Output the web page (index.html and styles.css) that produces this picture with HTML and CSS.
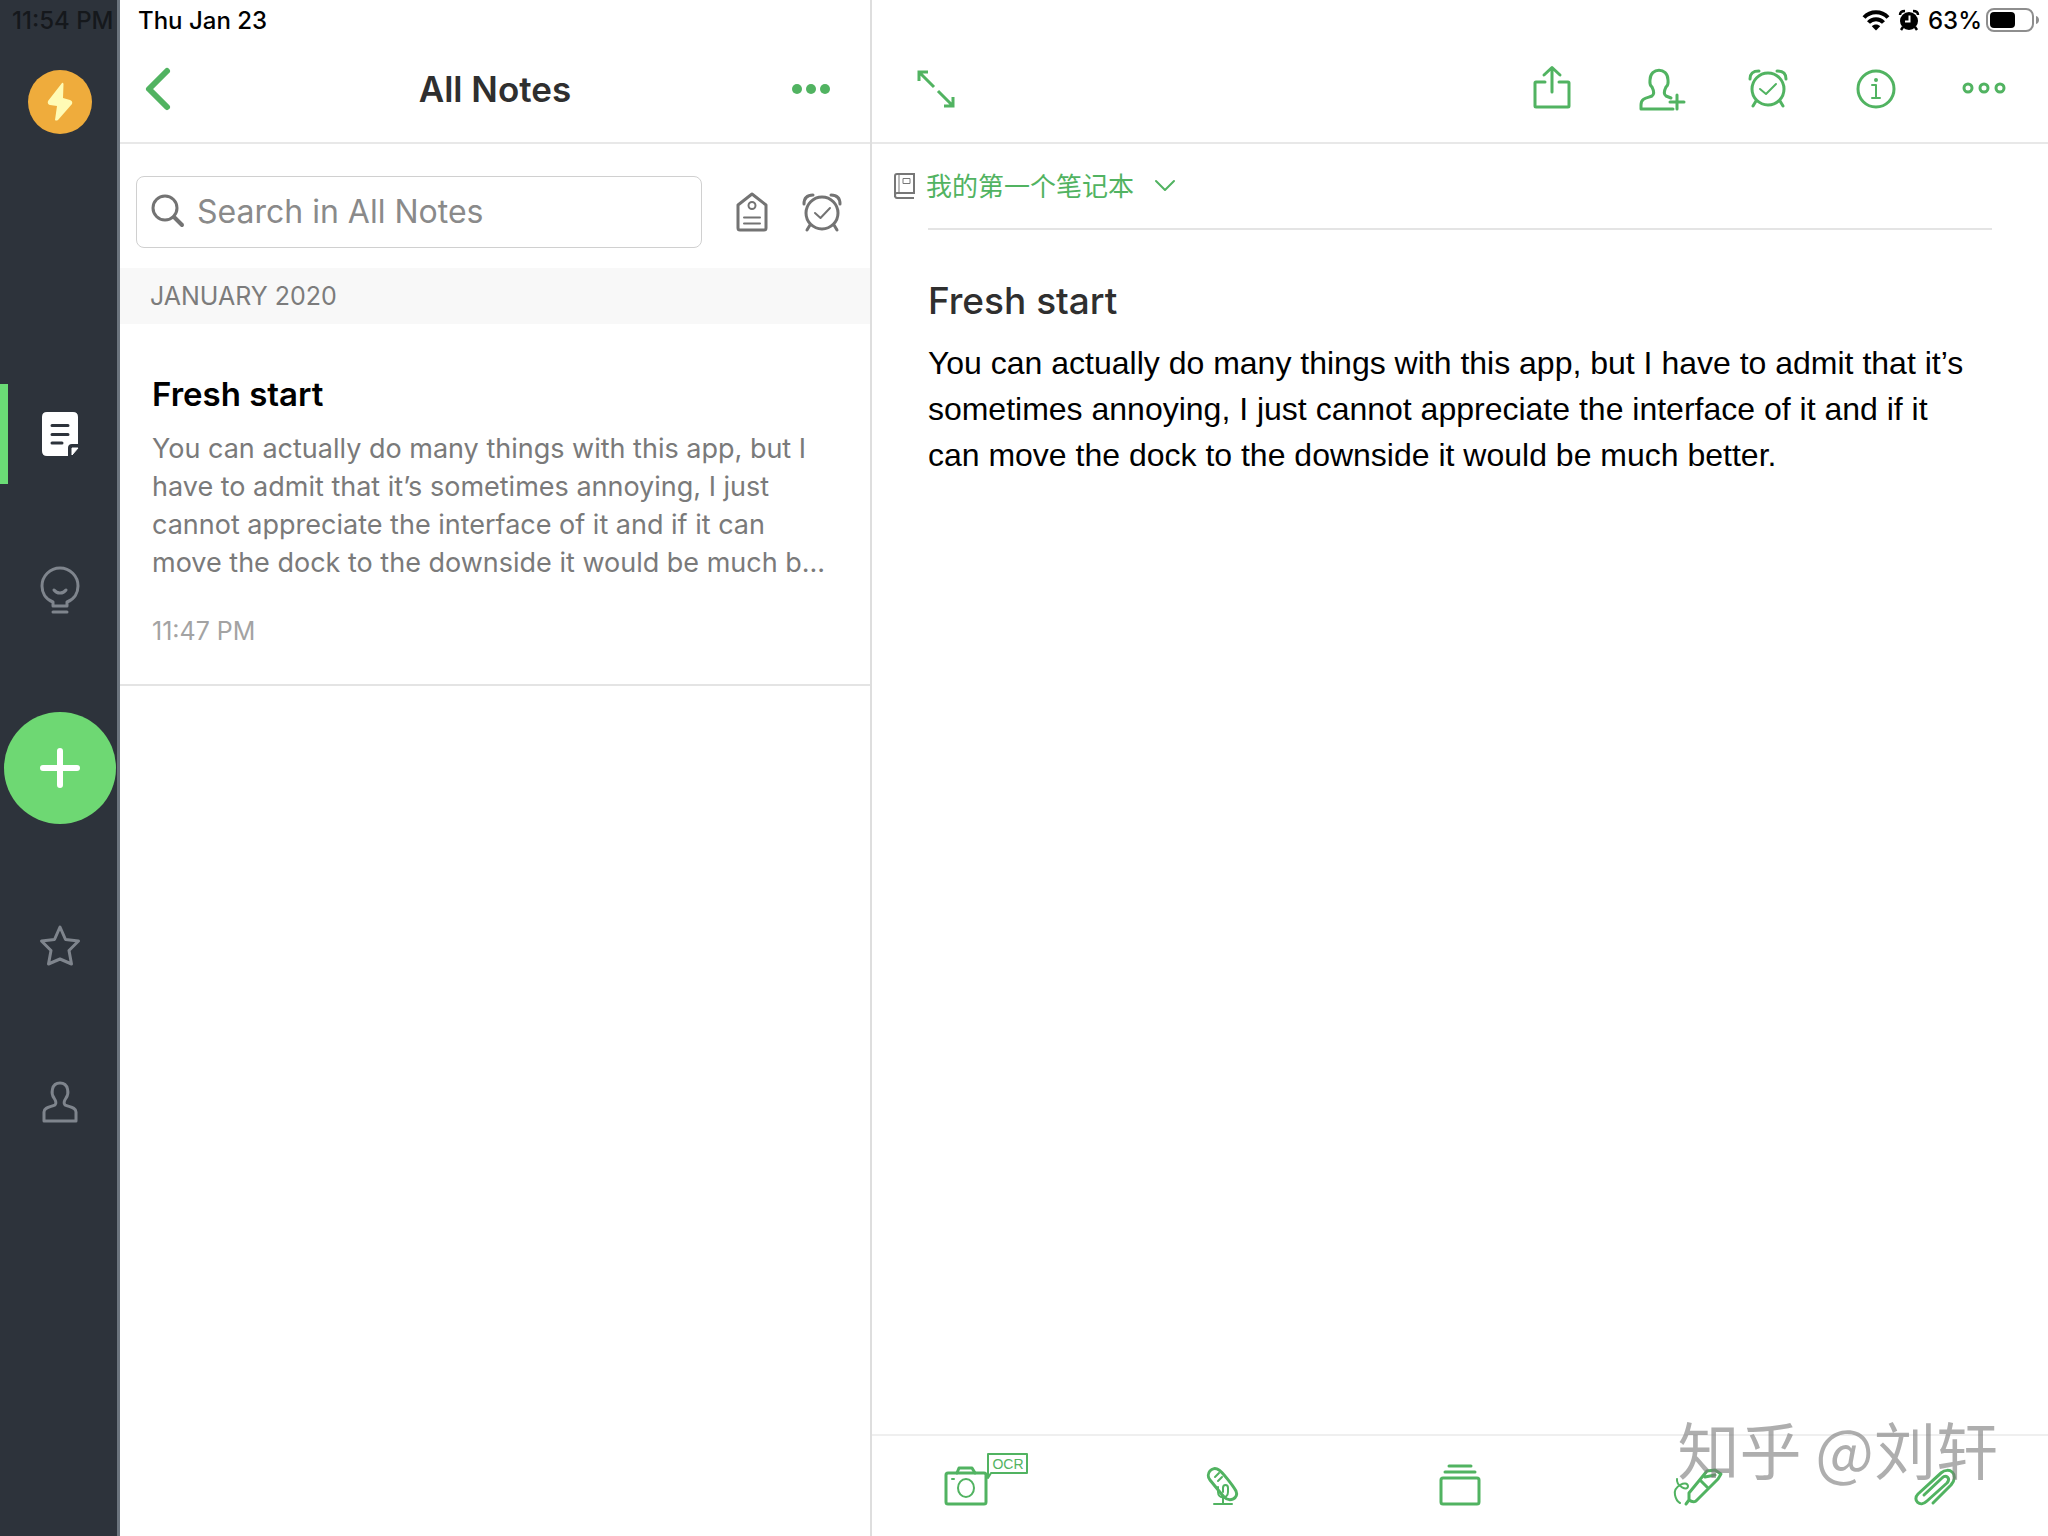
FILE: index.html
```html
<!DOCTYPE html>
<html lang="en">

<head>
    <meta charset="UTF-8">
    <meta name="viewport" content="width=device-width, initial-scale=1.0">
    <title>All Notes</title>
    <link rel="stylesheet" href="styles.css">
</head>

<body>
    <!-- Status bar, lies over all three columns -->
    <div class="status-bar">
        <span class="status-time">11:54 PM</span>
        <span class="status-date">Thu Jan 23</span>
        <div class="status-right">
            <svg width="28" height="22" viewBox="0 0 28 22" fill="none" stroke="#000" stroke-width="4">
                <path d="M2 8.500C8.500 1.500 19.500 1.500 26 8.500" />
                <path d="M6.500 13.500C10.500 9 17.500 9 21.500 13.500" />
                <path d="M14 21.500L9.800 17.200C12 14.800 16 14.800 18.200 17.200Z" fill="#000" stroke="none" />
            </svg>
            <svg width="22" height="22" viewBox="0 0 22 22" fill="none" stroke="#000" stroke-width="2.500">
                <circle cx="11" cy="12" r="9" fill="#000" stroke="none" />
                <path d="M2 6C2 3.500 4 2 7 2M20 6C20 3.500 18 2 15 2M5 18L3 21M17 18L19 21" />
                <path d="M11.500 6.500V12.500H7" stroke="#fff" stroke-width="2" />
            </svg>
            <span>63%</span>
            <svg class="battery" width="54" height="26" viewBox="0 0 54 26">
                <rect x="1" y="2" width="46" height="22" rx="7" fill="none" stroke="#8e8e8e" stroke-width="2" />
                <rect x="4" y="5" width="25" height="16" rx="4" />
                <path d="M50 9C54 10 54 16 50 17Z" fill="#8e8e8e" />
            </svg>
        </div>
    </div>

    <div class="app">
        <nav class="rail">
            <button class="rail-avatar" aria-label="Account">
                <svg width="64" height="64" viewBox="0 0 64 64">
                    <circle cx="32" cy="32" r="32" fill="#efac3c" />
                    <path d="M34 13L20 31Q19 34 22 35L29 36L27 50Q28 51 30 50L44 34Q45 31 42 30L35 28L35.500 14Q35 12 34 13Z" fill="#fffbb5" />
                </svg>
            </button>
            <button class="rail-item active" aria-label="Notes">
                <svg width="40" height="46" viewBox="0 0 40 46">
                    <path d="M7 1H33Q38 1 38 6V33H32Q28 33 28 37V45H7Q2 45 2 40V6Q2 1 7 1Z" fill="#fff" />
                    <path d="M32 37H38L32 44Z" fill="#fff" stroke="#fff" />
                    <path d="M12 14.500H28M12 23.500H28M12 32H22" stroke="#2d333b" stroke-width="3" stroke-linecap="round" />
                </svg>
            </button>
            <button class="rail-item" aria-label="Explore">
                <svg width="40" height="48" viewBox="0 0 40 48" class="line">
                    <path d="M13 40V36C5 33 2 26 2 20A18 18 0 0 1 38 20C38 26 35 33 27 36V40ZM13 46H27" />
                    <path d="M14 24C17 28 23 28 26 24" />
                </svg>
            </button>
            <button class="rail-add" aria-label="New note">
                <svg width="40" height="40" viewBox="0 0 40 40" fill="none" stroke="#fff" stroke-width="6" stroke-linecap="round">
                    <path d="M20 3V37M3 20H37" />
                </svg>
            </button>
            <button class="rail-item" aria-label="Shortcuts">
                <svg width="40" height="42" viewBox="0 0 40 42" class="line">
                    <path d="M20 2L25.500 14.500L38.500 16L29 25.500L31.500 39L20 34L8.500 39L11 25.500L1.500 16L14.500 14.500Z" />
                </svg>
            </button>
            <button class="rail-item" aria-label="Profile">
                <svg width="36" height="42" viewBox="0 0 36 42" class="line">
                    <path d="M2 40V31C2 26 9 26 13 24C15 22 14 20 12 17C9 13 9 2 18 2C27 2 27 13 24 17C22 20 21 22 23 24C27 26 34 26 34 31V40Z" />
                </svg>
            </button>
        </nav>

        <section class="list">
            <header class="bar list-header">
                <button class="back" aria-label="Back">
                    <svg width="28" height="44" viewBox="0 0 28 44" class="line" stroke-width="6">
                        <path d="M23 4L5 22L23 40" />
                    </svg>
                </button>
                <h1>All Notes</h1>
                <button class="more" aria-label="More">
                    <svg width="38" height="12" viewBox="0 0 38 12" fill="currentColor">
                        <circle cx="5" cy="6" r="5" />
                        <circle cx="19" cy="6" r="5" />
                        <circle cx="33" cy="6" r="5" />
                    </svg>
                </button>
            </header>

            <div class="search-row">
                <label class="search-box" for="search">
                    <svg width="34" height="34" viewBox="0 0 34 34" class="line" stroke-width="3">
                        <circle cx="14" cy="14" r="12" />
                        <path d="M23 23L31 31" stroke-width="4" />
                    </svg>
                    <input type="text" id="search" placeholder="Search in All Notes" aria-label="Search in All Notes">
                </label>
                <button aria-label="Tags">
                    <svg width="32" height="40" viewBox="0 0 32 40" class="line" stroke-width="3">
                        <path d="M2 13L16 2L30 13V36Q30 38 28 38H4Q2 38 2 36Z" />
                        <circle cx="16" cy="13.500" r="3.500" stroke-width="2" />
                        <path d="M8 25.500H24M8 31.500H24" stroke-width="2" />
                    </svg>
                </button>
                <button aria-label="Reminders">
                    <svg width="40" height="40" viewBox="0 0 40 40" class="line">
                        <circle cx="20" cy="21" r="16" />
                        <path d="M2 12C2 6 5 3 11 3M38 12C38 6 35 3 29 3M8 33L5 38M32 33L35 38" />
                        <path d="M13 21L18.500 26L28 16" stroke-width="2" />
                    </svg>
                </button>
            </div>

            <h2 class="month">JANUARY 2020</h2>

            <a class="note" href="#note">
                <h3>Fresh start</h3>
                <p>You can actually do many things with this app, but I have to admit that it’s sometimes annoying, I just cannot appreciate the interface of it and if it can move the dock to the downside it would be much b...</p>
                <time>11:47 PM</time>
            </a>
        </section>

        <main class="editor">
            <header class="bar editor-header">
                <button class="expand" aria-label="Expand">
                    <svg width="40" height="40" viewBox="0 0 40 40" fill="none" stroke="currentColor" stroke-width="3">
                        <path d="M3 12V3H12M3 3L18 18M22 22L37 37M28 37H37V28" />
                    </svg>
                </button>
                <button aria-label="Share">
                    <svg width="46" height="46" viewBox="0 0 46 46" class="line">
                        <path d="M16 16H7Q6 16 6 17V40Q6 41 7 41H39Q40 41 40 40V17Q40 16 39 16H30" />
                        <path d="M23 26V2M15 9L23 1.500L31 9" />
                    </svg>
                </button>
                <button aria-label="Add people">
                    <svg width="46" height="46" viewBox="-2 0 46 46" class="line">
                        <path d="M34 43H2V39C2 32 8 32 13 30C16 28 15 25 13 21C10 19 11 16 11 14C11 1 29 1 29 14C29 16 30 19 27 21C25 25 24 28 27 30L32 32" />
                        <path d="M38 29V43M31 36H45" />
                    </svg>
                </button>
                <button aria-label="Set reminder">
                    <svg width="46" height="46" viewBox="0 0 46 46" class="line">
                        <circle cx="23" cy="23" r="16" />
                        <path d="M5 13C5 7 8 5 14 5M41 13C41 7 38 5 32 5M11 35L8 40M35 35L38 40" />
                        <path d="M15 23L21 28L31 18" stroke-width="2" />
                    </svg>
                </button>
                <button aria-label="Note info">
                    <svg width="46" height="46" viewBox="0 0 46 46" class="line">
                        <circle cx="23" cy="23" r="18" />
                        <path d="M19 19H23V32M19 32H27" stroke-width="2" />
                        <circle cx="23" cy="14" r="1" stroke-width="2" />
                    </svg>
                </button>
                <button aria-label="More actions">
                    <svg width="46" height="46" viewBox="0 0 46 46" class="line">
                        <circle cx="7" cy="22" r="4" />
                        <circle cx="23" cy="22" r="4" />
                        <circle cx="39" cy="22" r="4" />
                    </svg>
                </button>
            </header>

            <div class="notebook">
                <svg width="22" height="26" viewBox="0 0 22 26" fill="none" stroke="#777" stroke-width="2">
                    <path d="M1 24V3Q1 1 3 1H20V20H3Q1 20 1 22Q1 25 3 25H20" />
                    <path d="M5 2V20M9 5.500H16V10.500H9Z" stroke-width="1" />
                </svg>
                <select aria-label="Notebook">
                    <option>我的第一个笔记本</option>
                </select>
                <svg width="20" height="12" viewBox="0 0 20 12" class="line" stroke-width="2">
                    <path d="M1 1L10 10L19 1" />
                </svg>
            </div>

            <article id="note" class="content">
                <h2>Fresh start</h2>
                <p>You can actually do many things with this app, but I have to admit that it’s sometimes annoying, I just cannot appreciate the interface of it and if it can move the dock to the downside it would be much better.</p>
            </article>

            <footer class="tools">
                <button aria-label="Camera with OCR">
                    <svg width="84" height="52" viewBox="0 0 84 52" class="line">
                        <rect x="2" y="19" width="40" height="31" rx="2" />
                        <path d="M13 19L15 14H28L31 19" />
                        <ellipse cx="22" cy="34" rx="8" ry="9" stroke-width="2" />
                        <path d="M8 25H10M44 24V0H83V19H47L44 24" stroke-width="2" />
                        <text x="64" y="15" text-anchor="middle" class="ocr">OCR</text>
                    </svg>
                </button>
                <button aria-label="Record audio">
                    <svg width="84" height="52" viewBox="0 0 84 52" class="line">
                        <path d="M29 26C24 20 31 11 38 16C41 18 51 30 55 37C58 44 49 49 43 43L38 37Z" />
                        <path d="M34 23L38 19M37 27L41 23M42 43V50M33 50H51" stroke-width="2" />
                        <path d="M37 33V38C37 45 47 45 47 38V34C47 30 42 30 42 34V38" stroke-width="2" />
                    </svg>
                </button>
                <button aria-label="Templates">
                    <svg width="84" height="52" viewBox="0 0 84 52" class="line">
                        <rect x="23" y="24" width="38" height="26" rx="2" />
                        <path d="M27 18H57M31 12H53" />
                    </svg>
                </button>
                <button aria-label="Sketch">
                    <svg width="84" height="52" viewBox="0 0 84 52" class="line" stroke-width="3">
                        <path d="M31 50L34 46L34 39L52 17L60 16L66 20L63 25L41 47Q38 49 34 46M46 27L53 34M50 23L60 21" />
                        <path d="M22 25C21 32 33 38 33 32C32 26 18 32 20 41C21 46 23 48 25 49" stroke-width="2" />
                    </svg>
                </button>
                <button aria-label="Attach file">
                    <svg width="84" height="52" viewBox="0 0 84 52" class="line">
                        <path d="M41 49L59 31C68 20 57 12 49 19L26 40C20 46 28 54 35 47L55 29C59 24 54 20 50 24L32 41" />
                    </svg>
                </button>
            </footer>
        </main>
    </div>

    <div class="watermark">知乎 @刘轩</div>
</body>

</html>
```
FILE: styles.css
```css
* {
    box-sizing: border-box;
}

body {
    font-family: Inter, "Noto Sans CJK SC", sans-serif;
    background-color: #fff;
    color: #000;
    margin: 0;
}

h1,
h2,
h3,
p {
    margin: 0;
}

button {
    background: none;
    border: none;
    padding: 0;
    color: inherit;
    cursor: pointer;
}

svg {
    display: block;
    flex: none;
    overflow: visible;
}

.line {
    fill: none;
    stroke: currentColor;
    stroke-linecap: round;
    stroke-linejoin: round;
}

.line:not([stroke-width]) {
    stroke-width: 3px;
}

/* Status bar */
.status-bar {
    position: absolute;
    top: 0;
    left: 0;
    right: 0;
    z-index: 2;
    display: flex;
    align-items: center;
    height: 40px;
    padding: 0 8px 0 12px;
    font-size: 24px;
    font-weight: 500;
}

.status-time {
    width: 126px;
    white-space: nowrap;
    color: #15181c;
}

.status-right {
    display: flex;
    align-items: center;
    gap: 8px;
    margin-left: auto;
}

.battery {
    margin-left: -4px;
}

/* Page columns */
.app {
    display: grid;
    grid-template-columns: 120px minmax(0, 39fr) minmax(0, 61fr);
    min-height: 100vh;
}

.bar {
    display: flex;
    align-items: center;
    height: 144px;
    padding-top: 36px;
    border-bottom: 2px solid #e8e8e8;
    color: #51b361;
}

/* Left rail */
.rail {
    display: flex;
    flex-direction: column;
    align-items: center;
    gap: 56px;
    padding-top: 70px;
    background-color: #2d333b;
    box-shadow: inset -3px 0 #6b747d;
    color: #7f858d;
}

.rail-avatar {
    margin-bottom: 194px;
}

.rail-item {
    display: flex;
    align-items: center;
    justify-content: center;
    width: 100%;
    height: 100px;
    border-left: 8px solid transparent;
    border-right: 8px solid transparent;
}

.rail-item.active {
    border-left-color: #6bdc76;
}

.rail-add {
    display: flex;
    align-items: center;
    justify-content: center;
    width: 112px;
    height: 112px;
    margin: 16px 0;
    border-radius: 50%;
    background-color: #6ed873;
}

/* Note list */
.list {
    border-right: 2px solid #dedede;
}

.list-header {
    display: grid;
    grid-template-columns: 1fr auto 1fr;
    padding-left: 24px;
    padding-right: 24px;
}

.back {
    justify-self: start;
}

.more {
    justify-self: end;
    margin-right: 16px;
}

.list-header h1 {
    font-size: 35px;
    font-weight: 600;
    line-height: 44px;
    color: #2f2f2f;
}

.search-row {
    display: flex;
    align-items: center;
    gap: 34px;
    padding: 32px 28px 20px 16px;
    color: #737373;
}

.search-box {
    display: flex;
    flex: 1;
    align-items: center;
    gap: 12px;
    min-width: 0;
    height: 72px;
    padding: 0 14px 2px;
    border: 1px solid #d0d0d0;
    border-radius: 8px;
}

.search-box input {
    flex: 1;
    min-width: 0;
    padding: 0;
    border: none;
    outline: none;
    font: 400 32px Inter, sans-serif;
}

.search-box input::placeholder {
    color: #8a8a8a;
}

.month {
    padding: 0 30px;
    background-color: #f8f8f8;
    font-size: 25px;
    font-weight: 400;
    line-height: 56px;
    color: #7c7c7c;
}

.note {
    display: block;
    padding: 48px 32px 34px;
    border-bottom: 2px solid #e4e4e4;
    color: #7a7a7a;
    text-decoration: none;
}

.note h3 {
    margin-bottom: 14px;
    font-size: 33px;
    font-weight: 600;
    line-height: 44px;
    color: #000;
}

.note p {
    margin-bottom: 30px;
    font-size: 27px;
    line-height: 38px;
}

.note time {
    display: block;
    font-size: 25px;
    line-height: 38px;
    color: #a3a3a3;
}

/* Editor */
.editor {
    display: flex;
    flex-direction: column;
}

.editor-header {
    gap: 62px;
    padding-left: 44px;
    padding-right: 41px;
}

.expand {
    margin-right: auto;
}

.notebook {
    display: flex;
    align-items: center;
    height: 84px;
    margin-right: 56px;
    padding-left: 22px;
    color: #51b361;
}

.notebook select {
    appearance: none;
    margin: 0 20px 0 10px;
    padding: 0 0 4px;
    border: none;
    background: none;
    font: 400 26px "Noto Sans CJK SC", sans-serif;
    color: inherit;
}

.content {
    flex: 1;
    margin: 0 56px;
    padding-top: 46px;
    border-top: 2px solid #e4e4e4;
}

.content h2 {
    margin-bottom: 14px;
    font-size: 37px;
    font-weight: 500;
    line-height: 50px;
    color: #2f2f2f;
}

.content p {
    padding-right: 16px;
    font-family: "Liberation Sans", Arial, sans-serif;
    font-size: 32px;
    line-height: 46px;
}

.tools {
    display: flex;
    align-items: center;
    justify-content: space-between;
    height: 102px;
    padding: 0 72px 12px;
    border-top: 2px solid #efefef;
    color: #51b361;
}

.ocr {
    fill: currentColor;
    stroke: none;
    font-size: 14px;
}

.watermark {
    position: absolute;
    right: 50px;
    bottom: 58px;
    font-family: "Noto Sans CJK SC", sans-serif;
    font-size: 62px;
    line-height: 60px;
    color: rgba(120, 120, 120, 0.6);
    pointer-events: none;
}
```
